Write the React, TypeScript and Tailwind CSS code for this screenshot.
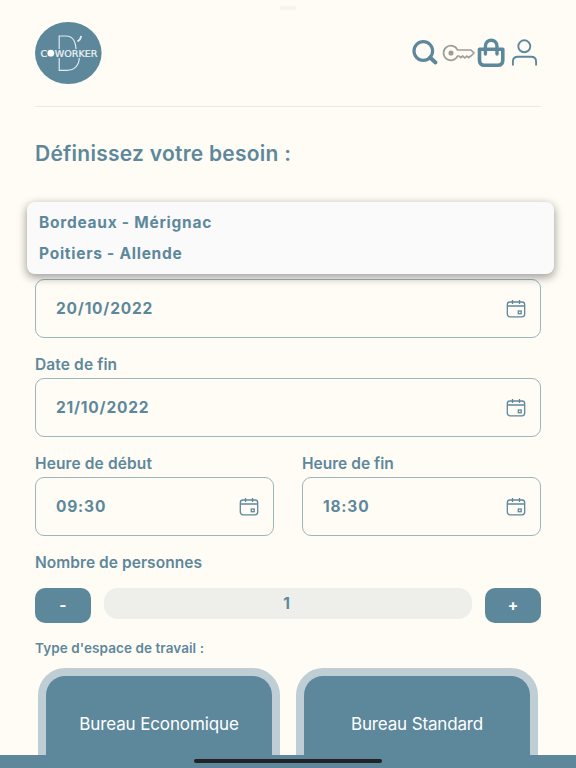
import { useState } from "react";

const places = ["Bordeaux - Mérignac", "Poitiers - Allende"];

function Logo() {
  return (
    <svg width={67} height={62} viewBox="0 0 67 62" className="block">
      <ellipse cx="33.300" cy="31" rx="33.300" ry="31" fill="#5d889c" />
      <g fill="none" stroke="#dfebf1" strokeWidth="1.200">
        <path d="M24.200 27V14H31c6 0 9.500 5 10 13" />
        <path d="M24.200 36v12.300H32c7.500 0 12-5 12.300-12.300" />
      </g>
      <path d="M42.500 19.500c2-1.200 3.300-3 3.800-5.500" fill="none" stroke="#e3edf2" strokeWidth="1.800" />
      <text
        x="5.500"
        y="34.500"
        fill="#eef4f6"
        stroke="#eef4f6"
        strokeWidth="0.200"
        fontSize="9"
        fontFamily="DejaVu Sans, sans-serif"
        textLength="57"
        lengthAdjust="spacingAndGlyphs"
      >
        C
        <tspan fill="transparent" stroke="none">O</tspan>
        WORKER
      </text>
      <circle cx="15.800" cy="31.200" r="3.400" fill="#fff" />
    </svg>
  );
}

function CalendarIcon() {
  return (
    <svg
      width={20}
      height={20}
      viewBox="0 0 20 20"
      fill="none"
      stroke="#5d889c"
      strokeWidth="1.300"
      className="shrink-0"
    >
      <rect x="1.300" y="3" width="17.400" height="14.800" rx="2.700" />
      <path d="M1.500 7h17M6.500 1v4M13.500 1v4" />
      <rect x="12.300" y="12" width="2.900" height="2.700" />
    </svg>
  );
}

function HeaderIcons() {
  return (
    <svg width={126} height={32} viewBox="412 37 126 32" fill="none" stroke="#5d889c">
      <circle cx="423.300" cy="51" r="9.300" strokeWidth="3.200" />
      <path d="m430 57.500 5.500 5" strokeWidth="4" strokeLinecap="round" />
      <g stroke="#9c9d99" strokeWidth="1.700" strokeLinejoin="round">
        <path d="M457.500 50a7.300 7.300 0 1 0 0 6h1.500l1.800 1.700 2-1.700 2 2 2-2 1.800 1.700 2-1.700h.4l3-3-3-3Z" />
        <circle cx="451" cy="53" r="1.700" fill="#9c9d99" />
      </g>
      <path
        d="M479.500 49.300h23.300V60c0 4-2 5.300-5 5.300h-13.300c-3 0-5-1.300-5-5.300Z"
        strokeWidth="3.600"
        strokeLinejoin="round"
      />
      <path d="M485.400 54v-7.500c0-8.300 11.600-8.300 11.600 0V54" strokeWidth="3.400" strokeLinecap="round" />
      <circle cx="524.300" cy="46.300" r="6" strokeWidth="1.900" />
      <path d="M512.900 65.500v-3.800c0-3 2-5 5-5h13.200c3 0 5 2 5 5v3.800" strokeWidth="1.900" />
    </svg>
  );
}

function Label({ text, className = "tracking-[0.120px]" }: { text: string; className?: string }) {
  return (
    <p className={`h-[41px] pt-[18px] text-[15.500px] leading-[20px] font-semibold whitespace-nowrap ${className}`}>
      {text}
    </p>
  );
}

function Field({ value }: { value: string }) {
  return (
    <div className="h-[59px] w-full flex items-center justify-between rounded-[9px] border border-[#9db5bd] pl-5 pr-[14px]">
      <span className="text-[15.500px] leading-[21px] font-bold tracking-[0.800px]">{value}</span>
      <CalendarIcon />
    </div>
  );
}

function SpaceCard({ name, className }: { name: string; className: string }) {
  return (
    <div className="h-[110px] w-[242px] rounded-t-[27px] border-8 border-b-0 border-[#bfced5] bg-[#5d889c] flex justify-center pt-[36px]">
      <span className={`text-[17px] leading-[24px] whitespace-nowrap text-white ${className}`}>{name}</span>
    </div>
  );
}

export default function App() {
  const [people, setPeople] = useState<number>(1);

  return (
    <div className="relative h-[768px] w-[576px] overflow-hidden bg-[#fffcf5] text-[#5d889c] font-['Inter','Liberation_Sans',sans-serif]">
      <div className="absolute top-[6px] left-[280px] h-[4px] w-4 rounded-full bg-[#f7f4ee]"></div>
      <div className="px-[35px]">
        <header className="h-[107px] border-b border-[#e9eae7] flex items-start justify-between pt-[22px]">
          <Logo />
          <div className="pt-[15px] pr-[3px]">
            <HeaderIcons />
          </div>
        </header>

        <h1 className="pt-[34px] h-[172px] text-[21px] leading-[26px] font-semibold tracking-[0.250px] whitespace-nowrap">
          Définissez votre besoin :
        </h1>

        <Field value="20/10/2022" />
        <div className="-mt-px">
          <Label text="Date de fin" />
          <Field value="21/10/2022" />
        </div>
        <div className="-mt-px flex gap-7">
          <div className="flex-1">
            <Label text="Heure de début" />
            <Field value="09:30" />
          </div>
          <div className="flex-1">
            <Label text="Heure de fin" className="tracking-[0.020px]" />
            <Field value="18:30" />
          </div>
        </div>
        <div className="-mt-px">
          <Label text="Nombre de personnes" className="tracking-[0.050px]" />
        </div>

        <div className="mt-[12px] flex items-start justify-between text-[15.500px] font-bold">
          <button
            className="h-[35px] w-14 rounded-[10px] bg-[#5d889c] text-white"
            onClick={() => setPeople(Math.max(1, people - 1))}
          >
            -
          </button>
          <div className="h-[31px] w-[368px] rounded-[14px] bg-[#eeeeeb] flex items-center justify-center pr-[3px]">
            {people}
          </div>
          <button
            className="h-[35px] w-14 rounded-[10px] bg-[#5d889c] text-white"
            onClick={() => setPeople(people + 1)}
          >
            +
          </button>
        </div>

        <p className="pt-[15px] h-[45px] text-[13.500px] leading-[20px] font-semibold tracking-[0.080px] whitespace-nowrap">
          Type d'espace de travail :
        </p>
        <div className="flex justify-between px-[3px]">
          <SpaceCard name="Bureau Economique" className="tracking-[-0.120px]" />
          <SpaceCard name="Bureau Standard" className="tracking-[-0.150px]" />
        </div>
      </div>

      <ul className="absolute top-[202px] left-[27px] w-[527px] h-[72px] rounded-lg bg-[#fafafa] px-3 pt-[5px] text-[15.500px] leading-[31px] font-bold tracking-[0.740px] shadow-[0_3px_8px_1px_rgba(0,0,0,0.35)]">
        {places.map((place) => (
          <li key={place}>{place}</li>
        ))}
      </ul>

      <footer className="absolute bottom-0 left-0 h-[13px] w-full bg-[#5d889c] flex justify-center pt-[4px]">
        <div className="h-[4px] w-[188px] rounded-full bg-[#202225]"></div>
      </footer>
    </div>
  );
}
